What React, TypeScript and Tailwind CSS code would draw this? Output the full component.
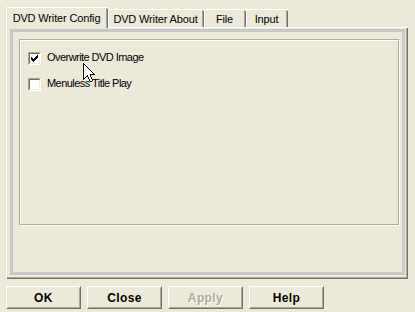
import React from "react";

const CURSOR = [
  "B...........",
  "BB..........",
  "BWB.........",
  "BWWB........",
  "BWWWB.......",
  "BWWWWB......",
  "BWWWWWB.....",
  "BWWWWWWB....",
  "BWWWWWWWB...",
  "BWWWWWWWWB..",
  "BWWWWWWWWWB.",
  "BWWWWWWBBBBB",
  "BWWWBWWB....",
  "BWWBBWWB....",
  "BWB..BWWB...",
  "BB...BWWB...",
  "B.....BWWB..",
  "......BWWB..",
  ".......BB...",
];

const CHECK = [
  "......X",
  ".....XX",
  "X...XXX",
  "XX.XXX.",
  "XXXXX..",
  ".XXX...",
  "..X....",
];

function PixelArt({ rows, colors }: { rows: string[]; colors: Record<string, string> }) {
  const w = rows[0].length;
  const h = rows.length;
  const rects: React.ReactElement[] = [];
  rows.forEach((r, y) =>
    r.split("").forEach((c, x) => {
      if (colors[c]) rects.push(<rect key={`${x}-${y}`} x={x} y={y} width={1} height={1} fill={colors[c]} />);
    })
  );
  return (
    <svg width={w} height={h} viewBox={`0 0 ${w} ${h}`} shapeRendering="crispEdges" className="block">
      {rects}
    </svg>
  );
}

function Checkbox({ checked, label }: { checked: boolean; label: string }) {
  return (
    <div className="flex items-center h-[13px]">
      <div className="w-[13px] h-[13px] border border-t-[#ACA899] border-l-[#ACA899] border-r-white border-b-white">
        <div className="w-[11px] h-[11px] border border-t-[#716F64] border-l-[#716F64] border-r-[#F1EFE2] border-b-[#F1EFE2] bg-white relative">
          {checked && (
            <div className="absolute left-[1px] top-[1px]">
              <PixelArt rows={CHECK} colors={{ X: "#000000" }} />
            </div>
          )}
        </div>
      </div>
      <span className="relative -top-[1px] ml-[6px] text-[11px] leading-[13px] tracking-[-0.55px] text-black">{label}</span>
    </div>
  );
}

function Tab({ label, width, selected }: { label: string; width: number; selected?: boolean }) {
  if (selected) {
    return (
      <div
        className="relative z-10 h-[21px] -mb-px bg-[#ECE9D8] border-t border-l border-white rounded-tl-[2px] flex"
        style={{ width }}
      >
        <div className="flex-1 border-r border-[#ACA899] flex justify-center pt-[4px] text-[11px] leading-[13px] tracking-[-0.15px] text-black">
          {label}
        </div>
        <div className="w-px bg-[#716F64] mt-[1px]" />
      </div>
    );
  }
  return (
    <div className="h-[18px] border-t border-l border-white rounded-tl-[2px] flex" style={{ width }}>
      <div className="flex-1 border-r border-[#ACA899] flex justify-center pt-[3px] text-[11px] leading-[13px] tracking-[-0.15px] text-black">
        {label}
      </div>
      <div className="w-px bg-[#716F64] mt-[1px]" />
    </div>
  );
}

function Button({ label, disabled }: { label: string; disabled?: boolean }) {
  return (
    <div className="w-[75px] h-[23px] border border-t-white border-l-white border-r-[#716F64] border-b-[#716F64]">
      <div className="w-full h-full border border-t-[#ECE9D8] border-l-[#ECE9D8] border-r-[#ACA899] border-b-[#ACA899] flex items-center justify-center">
        <span
          className={
            "text-[12px] leading-[14px] font-bold tracking-[0.4px] " +
            (disabled ? "text-[#ACA899] [text-shadow:1px_1px_0_#ffffff]" : "text-black")
          }
        >
          {label}
        </span>
      </div>
    </div>
  );
}

export default function App() {
  return (
    <div
      className="w-[415px] h-[312px] bg-[#ECE9D8] relative overflow-hidden"
      style={{ fontFamily: '"Liberation Sans", Arial, sans-serif' }}
    >
      {/* Tab strip */}
      <div className="flex items-end ml-[6px] pt-[7px] h-[27px]">
        <Tab label="DVD Writer Config" width={102} selected />
        <Tab label="DVD Writer About" width={96} />
        <Tab label="File" width={42} />
        <Tab label="Input" width={42} />
      </div>

      {/* Panel */}
      <div className="ml-[6px] w-[402px] h-[252px] border-t border-l border-white flex">
        <div className="flex-1 flex flex-col">
          <div className="flex-1 flex flex-col border-b border-[#ACA899]">
            <div className="flex-1 flex border-r border-[#ACA899]">
              <div className="flex-1 ml-[3px] mt-[1px] mr-[1px] mb-[2px] border-[3px] border-[#C8C8C8] flex flex-col">
                <div className="ml-[6px] mt-[7px] mr-[2px] h-[187px] border border-t-[#ACA899] border-l-[#ACA899] border-r-white border-b-white">
                  <div className="w-full h-full border border-t-white border-l-white border-r-[#ACA899] border-b-[#ACA899] pl-[7px] pt-[11px] flex flex-col gap-[13px]">
                    <Checkbox checked label="Overwrite DVD Image" />
                    <Checkbox checked={false} label="Menuless Title Play" />
                  </div>
                </div>
              </div>
            </div>
          </div>
          <div className="h-px bg-[#716F64]" />
        </div>
        <div className="w-px bg-[#716F64]" />
      </div>

      {/* Buttons */}
      <div className="flex gap-[6px] ml-[6px] mt-[7px]">
        <Button label="OK" />
        <Button label="Close" />
        <Button label="Apply" disabled />
        <Button label="Help" />
      </div>

      {/* Mouse cursor */}
      <div className="absolute left-[83px] top-[63px]">
        <PixelArt rows={CURSOR} colors={{ B: "#000000", W: "#ffffff" }} />
      </div>
    </div>
  );
}
